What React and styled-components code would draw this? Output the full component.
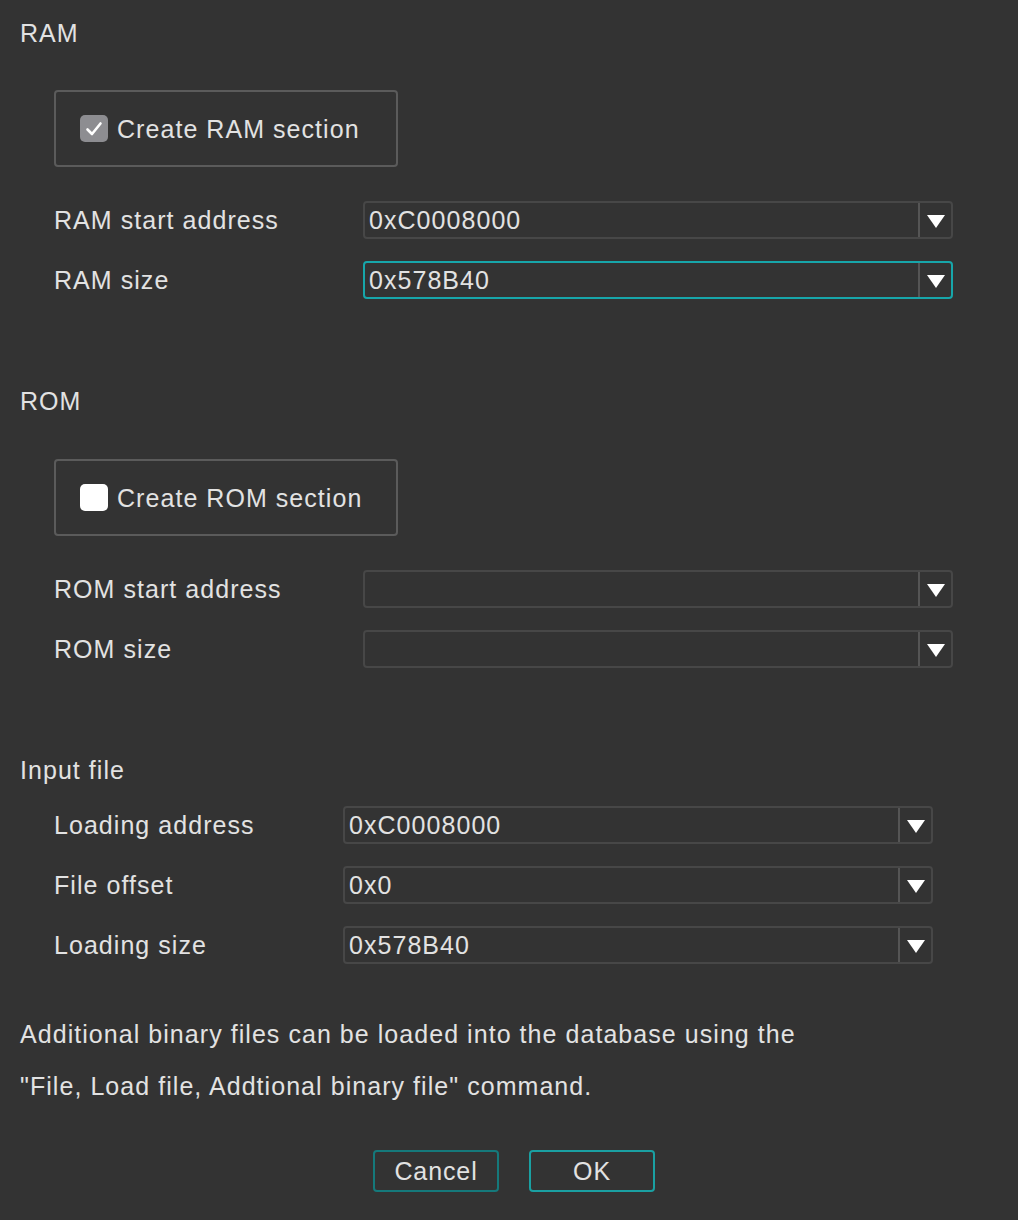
import React from "react";
import styled, { createGlobalStyle } from "styled-components";

const Global = createGlobalStyle`
  html, body { margin: 0; padding: 0; background: #333333; }
  body {
    font-family: "Liberation Sans", Arial, sans-serif;
    color: #e2e2e2;
  }
  * { box-sizing: border-box; }
`;

const Page = styled.div`
  width: 1018px;
  min-height: 1220px;
  background: #333333;
  padding: 18px 0 0 20px;
  font-size: 25px;
  letter-spacing: 1.05px;
`;

const Section = styled.section`
  display: flex;
  flex-direction: column;
  margin-bottom: ${(p) => p.$after || 0}px;
`;

const Title = styled.div`
  height: 30px;
  line-height: 30px;
  color: #e2e2e2;
`;

const Indent = styled.div`
  padding-left: 34px;
  display: flex;
  flex-direction: column;
`;

const GroupBox = styled.div`
  margin-top: ${(p) => p.$top}px;
  width: 344px;
  height: 77px;
  border: 2px solid #5b5b5b;
  border-radius: 4px;
  display: flex;
  align-items: center;
  padding-left: 24px;
  gap: 9px;
`;

const Box = styled.span`
  width: 28px;
  height: 27px;
  border-radius: 5px;
  background: ${(p) => (p.$checked ? "#8d8d91" : "#ffffff")};
  display: inline-flex;
  align-items: center;
  justify-content: center;
`;

const CheckLabel = styled.span`
  line-height: 30px;
`;

const Rows = styled.div`
  margin-top: ${(p) => p.$top}px;
  display: flex;
  flex-direction: column;
  gap: 22px;
`;

const Row = styled.div`
  display: grid;
  grid-template-columns: ${(p) => p.$label}px 590px;
  align-items: center;
  height: 38px;
`;

const Label = styled.span`
  line-height: 30px;
`;

const Combo = styled.div`
  height: 38px;
  border: 2px solid ${(p) => (p.$focused ? "#17a6aa" : "#474747")};
  border-radius: 4px;
  display: flex;
  align-items: stretch;
`;

const Value = styled.div`
  flex: 1;
  padding-left: 4px;
  line-height: 34px;
  color: #e2e2e2;
`;

const Divider = styled.div`
  width: 2px;
  background: #555555;
`;

const Arrow = styled.div`
  width: 31px;
  display: flex;
  align-items: center;
  justify-content: center;
  padding-top: 3px;
`;

const Note = styled.p`
  margin: 44px 0 0 0;
  line-height: 52px;
`;

const Buttons = styled.div`
  margin-top: 38px;
  display: flex;
  justify-content: center;
  gap: 30px;
  padding-right: 10px;
`;

const Button = styled.button`
  width: 126px;
  height: 42px;
  background: transparent;
  border: 2px solid ${(p) => (p.$primary ? "#1aa0a2" : "#15797b")};
  border-radius: 4px;
  color: #e2e2e2;
  font-family: inherit;
  font-size: 25px;
  letter-spacing: 0.9px;
  padding: 0;
`;

const Check = () => (
  <svg width="18" height="16" viewBox="0 0 18 16">
    <path d="M2.5 8.5 L7 13 L15.5 2.5" fill="none" stroke="#ffffff" strokeWidth="2.6" strokeLinecap="round" strokeLinejoin="round" />
  </svg>
);

const Tri = () => (
  <svg width="18" height="13" viewBox="0 0 18 13">
    <polygon points="0,0 18,0 9,13" fill="#ffffff" />
  </svg>
);

const Field = ({ label, value, focused, labelWidth }) => (
  <Row $label={labelWidth}>
    <Label>{label}</Label>
    <Combo $focused={focused}>
      <Value>{value}</Value>
      <Divider />
      <Arrow>
        <Tri />
      </Arrow>
    </Combo>
  </Row>
);

export default function App() {
  return (
    <>
      <Global />
      <Page>
        <Section $after={87}>
          <Title>RAM</Title>
          <Indent>
            <GroupBox $top={42}>
              <Box $checked>
                <Check />
              </Box>
              <CheckLabel>Create RAM section</CheckLabel>
            </GroupBox>
            <Rows $top={34}>
              <Field labelWidth={309} label="RAM start address" value="0xC0008000" />
              <Field labelWidth={309} label="RAM size" value="0x578B40" focused />
            </Rows>
          </Indent>
        </Section>
        <Section $after={87}>
          <Title>ROM</Title>
          <Indent>
            <GroupBox $top={43}>
              <Box />
              <CheckLabel>Create ROM section</CheckLabel>
            </GroupBox>
            <Rows $top={34}>
              <Field labelWidth={309} label="ROM start address" value="" />
              <Field labelWidth={309} label="ROM size" value="" />
            </Rows>
          </Indent>
        </Section>
        <Section>
          <Title>Input file</Title>
          <Indent>
            <Rows $top={21}>
              <Field labelWidth={289} label="Loading address" value="0xC0008000" />
              <Field labelWidth={289} label="File offset" value="0x0" />
              <Field labelWidth={289} label="Loading size" value="0x578B40" />
            </Rows>
          </Indent>
        </Section>
        <Note>
          Additional binary files can be loaded into the database using the
          <br />
          "File, Load file, Addtional binary file" command.
        </Note>
        <Buttons>
          <Button>Cancel</Button>
          <Button $primary>OK</Button>
        </Buttons>
      </Page>
    </>
  );
}
